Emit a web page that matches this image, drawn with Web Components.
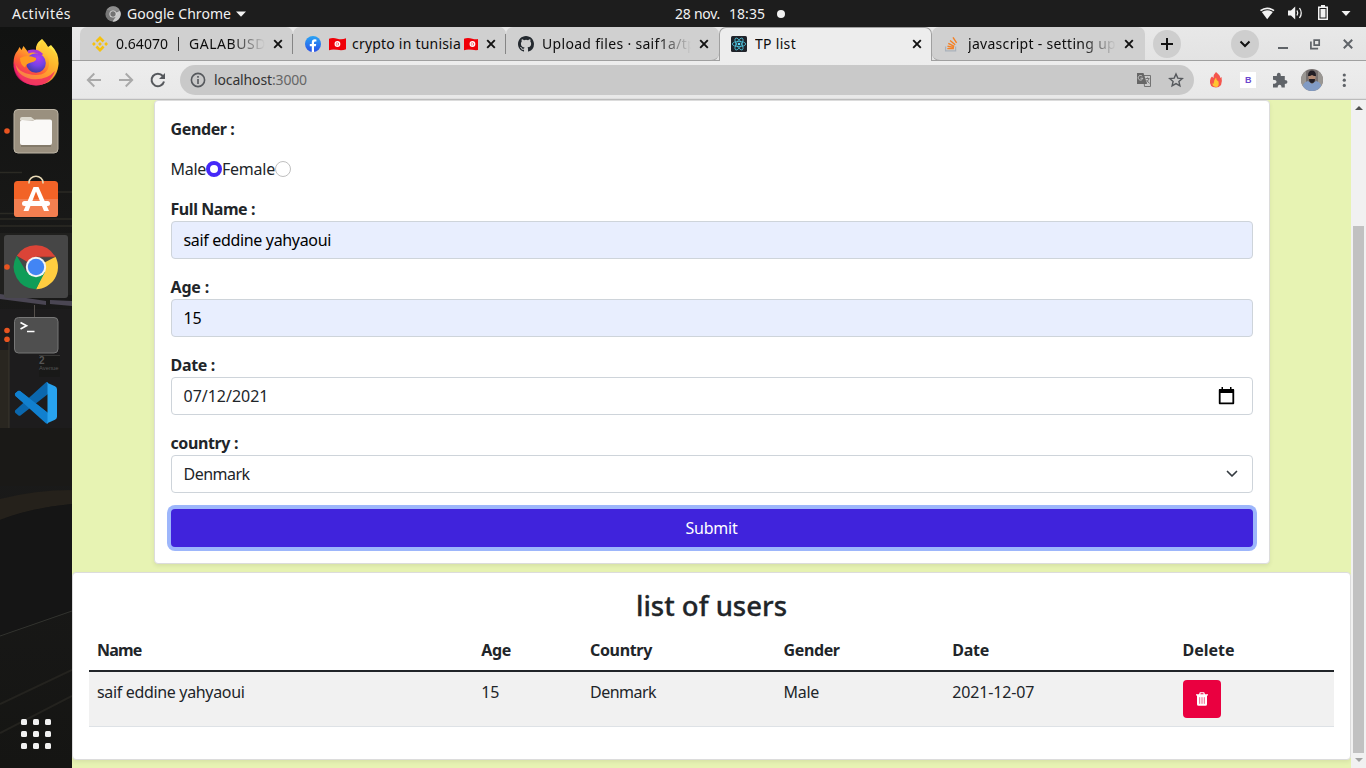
<!DOCTYPE html>
<html lang="fr">
<head>
<meta charset="utf-8">
<title>TP list</title>
<style>
html,body{margin:0;height:100%;overflow:hidden;background:#1d1d1d}
body{font-family:"Noto Sans","Open Sans",sans-serif}
</style>
</head>
<body>
<desk-top></desk-top>
<script>
const define = (name, html, setup) => customElements.define(name, class extends HTMLElement {
  connectedCallback() {
    if (this.shadowRoot) return;
    const t = document.createElement('template');
    t.innerHTML = typeof html === 'function' ? html(this) : html;
    this.attachShadow({mode: 'open'}).appendChild(t.content.cloneNode(true));
    if (setup) setup(this);
  }
});

/* A line of text tracked to a given width; --lift raises its baseline. */
define('fit-text', `<style>
:host{display:inline-block;white-space:pre;flex:none;vertical-align:var(--lift,0px);margin-top:calc(-1*var(--lift,0px));margin-bottom:var(--lift,0px)}
span{display:inline-block;white-space:pre}
</style><span><slot></slot></span>`, el => {
  const w = +el.getAttribute('w'), span = el.shadowRoot.querySelector('span');
  const natural = span.getBoundingClientRect().width;
  if (w && natural) {
    span.style.letterSpacing = ((w - natural) / el.textContent.length) + 'px';
    el.style.width = w + 'px';
  }
});

define('top-bar', `<style>
:host{--lift:.5px;display:grid;grid-template-columns:1fr auto 1fr;align-items:center;height:27px;background:#1d1d1d;color:#f2f2f2;font-size:14px;line-height:27px}
div{display:flex;align-items:center;height:27px}
.l{padding-left:12px}.l svg{margin:0 6px 0 34px}.l .tri{margin:0 0 0 5px}
.c{gap:9px;padding-left:94px}.c i{width:8px;height:8px;border-radius:50%;background:#f2f2f2;margin-left:3px}
.r{justify-content:flex-end}
</style>
<div class="l"><fit-text w="59">Activités</fit-text>
<svg width="16" height="16" viewBox="0 0 16 16"><circle cx="8" cy="8" r="7.6" fill="#777"/><path d="M8 8 15 4.7A7.6 7.6 0 0 1 7.6 15.6L11.4 9.8Z" fill="#c9c9c9"/><path d="M1.5 4A7.6 7.6 0 0 1 15 4.7H8Z" fill="#8d8d8d"/><circle cx="8" cy="8" r="3.6" fill="#ddd"/><circle cx="8" cy="8" r="2.7" fill="#737373"/></svg>
<fit-text w="104">Google Chrome</fit-text><svg class="tri" width="10" height="6"><path d="M0 .5H10L5 5.7Z" fill="#f2f2f2"/></svg></div>
<div class="c"><fit-text w="45">28 nov.</fit-text><fit-text w="36">18:35</fit-text><i></i></div>
<div class="r"><svg width="110" height="27" viewBox="1256 0 110 27"><g fill="#f2f2f2"><path d="M1260 10Q1267 5 1274.500 10L1273.500 11.300Q1267 7 1261 11.300Z"/><path d="M1261.800 12Q1267 8.500 1272.800 12L1267.200 19.300Z"/><path d="M1288 10.500h3l4.200-4v13l-4.200-4h-3z"/><path d="M1318 6.500h3v-1.500h4v1.500h3v13.500h-10z"/><path d="M1341.500 11H1350.500L1346 16Z"/></g><rect x="1320" y="8.500" width="6" height="9.500" fill="#f2f2f2" stroke="#1d1d1d" stroke-width="1"/><g fill="none" stroke="#f2f2f2" stroke-width="1.300"><path d="M1297 10.500q1.500 2.500 0 5M1299.500 8q3.500 5 0 10"/></g></svg></div>`);

const dock = {
 firefox: `<defs><linearGradient id="a" x1=".8" y1=".1" x2=".3" y2="1"><stop offset="0" stop-color="#fff44f"/><stop offset=".35" stop-color="#ffa52a"/><stop offset=".65" stop-color="#ff5a36"/><stop offset="1" stop-color="#e31587"/></linearGradient><radialGradient id="b" cx=".6" cy=".25" r=".8"><stop offset="0" stop-color="#b23cf0"/><stop offset=".5" stop-color="#7542e5"/><stop offset="1" stop-color="#3a3a9c"/></radialGradient></defs>
 <path d="M42 39q4 4 6 8l3-2q8 8 7.500 18a22.500 22.500 0 0 1-45 0Q13.500 55 18 50l1.500-3 2 3 2-4 4.500 6 8-2q-1-6 6-11z" fill="url(#a)"/><path d="M42 39q-3 6-1 11 8 3 8 13 0 12-13 12-16-1-20-10 2 20 21 20 20-1 21.500-21Q58 52 48 47q-2-4-6-8z" fill="#ffc52e" opacity=".55"/><path d="M14 62q3 14 17 17 15 2 24-8-5 14-19 14.500Q16 84 13.500 67z" fill="#f0186a" opacity=".7"/>
 <circle cx="36" cy="63" r="9.800" fill="url(#b)"/><path d="M20 58q7-4 16 0 1 3-5 4.500-5 1-6 5-5-3-5-9.500z" fill="#ff9a22"/><path d="M28 52q8-3 14 3" stroke="#a837d8" stroke-width="3" fill="none"/>`,
 files: `<rect x="14" y="109.500" width="44" height="43.500" rx="4" fill="#9a907f" stroke="#bdb5a6"/><path d="M20 119q0-2 2-2h9l4 3h-15z" fill="#dcd9ce"/><path d="M20 122q0-2 2-2l11 .5 3-1h14q2 0 2 2v21.500q0 2-2 2H22q-2 0-2-2z" fill="#faf9f7"/><path d="M21 146h30" stroke="#6d6557"/><circle cx="7" cy="131" r="2.800" fill="#e95420"/>`,
 store: `<rect x="14" y="181" width="44" height="36" rx="3.500" fill="#f26327"/><path d="M14 199h44v14.500q0 3.500-3.500 3.500h-37q-3.500 0-3.500-3.500z" fill="#f37f50"/><path d="M29 183.500v-1a7 6.200 0 0 1 14 0v1" fill="none" stroke="#e8d9b5" stroke-width="1.600"/><g fill="#fff"><path d="M33.500 187h5l10.500 24h-5L36 191.500 28.500 211h-5z"/><rect x="22" y="201" width="28" height="5" rx="2.500"/></g>`,
 chrome: `<rect x="4" y="235" width="64" height="63" rx="3" fill="#464646"/><path d="M36 267 16.800 255.800A22.200 22.200 0 0 1 55.300 256.800H36Z" fill="#db4437"/><path d="M36 267 55.500 256.800A22.200 22.200 0 0 1 36 289.200L44 272Z" fill="#ffcd40"/><path d="M16.800 255.800A22.200 22.200 0 0 0 36 289.200L45 272 36 267 26.500 272Z" fill="#0f9d58"/><path d="M36 256.800H55.300" stroke="#c53929" stroke-width=".6"/><circle cx="36" cy="267" r="10.200" fill="#f4f4f4"/><circle cx="36" cy="267" r="8.200" fill="#4285f4"/><circle cx="7" cy="267" r="2.800" fill="#e95420"/>`,
 terminal: `<rect x="14.500" y="317.500" width="43.500" height="35.500" rx="4" fill="#4f4f4f" stroke="#777"/><path d="M20.500 322.500l6 3.200-6 3.200M27 331.500h7.500" fill="none" stroke="#fff" stroke-width="1.700"/><circle cx="7" cy="330.500" r="2.800" fill="#e95420"/><circle cx="7" cy="339.200" r="2.800" fill="#e95420"/>`,
 code: `<path d="M15 393.500l3-2.500q1-.5 2 0L48 413v10.500L15.500 396q-1-1-.5-2.500z" fill="#0878c9"/><path d="M15 410.500q-.5 1.500.5 2.500l3 2.500q1 .5 2 0L48 394v-12q-2 0-3 1.200z" fill="#0b67ad"/><path d="M15 393.500l3-2.500q1-.5 2 0L38 405 48 413v10.500q-2 .5-3-1L15.500 396z" fill="#1180cf"/><path d="M45.500 382l9.500 4.200q2 1 2 3v27.600q0 2-2 3l-9.500 4.200q2-.5 2-2.500v-37q0-2-2-2.500z" fill="#28a2ee"/>`
};
define('dock-icon', el => `<style>:host{display:block;height:68px}svg{display:block;overflow:visible}</style><svg width="72" height="68" viewBox="0 ${el.getAttribute('top')} 72 68">${dock[el.getAttribute('name')]}</svg>`);

define('app-dock', `<style>
:host{display:flex;flex-direction:column;position:relative;width:72px;padding-top:1px;box-sizing:border-box;background:#151514}
.wall{position:absolute;inset:0}
dock-icon,.grid{position:relative}
.grid{display:grid;grid-template-columns:repeat(3,6px);gap:6px;margin:auto 0 19px 21px}
.grid i{width:6px;height:6px;border-radius:1.500px;background:#f1f1f1}
</style>
<svg class="wall" width="72" height="741" viewBox="0 27 72 741">
<defs><linearGradient id="s" x2="0" y2="1"><stop offset="0" stop-color="#111211"/><stop offset=".3" stop-color="#191918"/><stop offset=".5" stop-color="#1b1b1b"/><stop offset="1" stop-color="#151513"/></linearGradient></defs>
<rect y="27" width="72" height="741" fill="url(#s)"/>
<path d="M0 172.500h22M0 213.500h34M30 192h42M0 226h72M0 219h72" stroke="#2b2a24" stroke-width="1.500"/>
<path d="M0 233h72v62H0z" fill="#20201e"/><path d="M0 294l46 7v4L0 299zM50 300l22 1v5l-22-2z" fill="#4a4653"/><path d="M0 309h72v119H0z" fill="#1d1c1d"/><path d="M34.500 305v12" stroke="#55504c"/><path d="M0 350h9v78H0z" fill="#292620"/><path d="M9 340v88" stroke="#3a362e"/><path d="M39 355h21v22H39z" fill="#191918"/><path d="M39 355.500h21" stroke="#373735"/>
<path d="M0 428H72v58H0z" fill="#1a1917"/><path d="M0 499q35-9 72-9v14Q30 508 0 520z" fill="#25211b"/><path d="M0 520q30-12 72-16v106L0 636z" fill="#151515"/><path d="M0 636 72 611" stroke="#32332f"/><path d="M0 704 72 670M0 733 72 696" stroke="#24231f" stroke-width="2"/>
<g fill="#555" font-family="Liberation Sans" ><text x="39" y="364" font-size="10" font-weight="bold">2</text><text x="39" y="370" font-size="5.800">Avenue</text></g></svg>
<dock-icon name="firefox" top="28"></dock-icon><dock-icon name="files" top="96"></dock-icon><dock-icon name="store" top="164"></dock-icon><dock-icon name="chrome" top="232"></dock-icon><dock-icon name="terminal" top="300"></dock-icon><dock-icon name="code" top="368"></dock-icon>
<div class="grid"><i></i><i></i><i></i><i></i><i></i><i></i><i></i><i></i><i></i></div>`);

define('flag-tn', `<style>:host{display:block;flex:none;width:17px;height:16px}svg{display:block}</style><svg width="17" height="16" viewBox="0 0 17.500 16"><path d="M0 2.500q4-1.500 8.500 0t9-.5v11.500q-4 1.500-9 .5t-8.500.5z" fill="#f00008"/><circle cx="8.700" cy="8" r="3" fill="#fff"/><path d="M10.300 6.500a2 2 0 1 0 0 3 1.800 1.800 0 1 1 0-3z" fill="#f00008"/><circle cx="9.600" cy="8" r=".7" fill="#f00008"/></svg>`);

const fav = {
 binance: '<g fill="#f5c10e"><path d="M8 0l4.500 4.500-1.900 1.900L8 3.800 5.400 6.400 3.500 4.500zM1.900 6.100 3.800 8 1.900 9.900 0 8zM14.100 6.100 16 8l-1.900 1.900L12.200 8zM8 6.100 9.900 8 8 9.900 6.100 8zM8 16l4.500-4.500-1.900-1.900L8 12.200 5.400 9.600 3.500 11.500z"/></g>',
 facebook: '<defs><linearGradient id="f" x2="0" y2="1"><stop stop-color="#2aa4f4"/><stop offset="1" stop-color="#2851e8"/></linearGradient></defs><circle cx="8" cy="8" r="8" fill="url(#f)"/><path d="M6.800 16v-5.700H4.800V8h2V6.500q0-3.200 3.100-3.200l1.500.1v2h-1q-1.400 0-1.400 1.300V8h2.200l-.4 2.300H9V16z" fill="#fff"/>',
 github: '<path fill="#24292f" d="M8 0C3.580 0 0 3.580 0 8c0 3.540 2.290 6.530 5.470 7.590.4.070.55-.17.55-.38v-1.490c-2.010.37-2.530-.49-2.690-.94-.09-.23-.48-.94-.82-1.130-.28-.15-.68-.52-.01-.53.63-.01 1.080.58 1.230.82.72 1.210 1.870.87 2.330.66.07-.52.28-.87.51-1.070-1.780-.2-3.640-.89-3.640-3.950 0-.87.310-1.590.82-2.150-.08-.2-.36-1.020.08-2.120 0 0 .67-.21 2.200.82a7.600 7.600 0 0 1 4 0c1.530-1.040 2.200-.82 2.200-.82.44 1.100.16 1.920.08 2.120.51.56.82 1.270.82 2.150 0 3.070-1.870 3.750-3.650 3.950.29.25.54.73.54 1.480v2.200c0 .21.15.46.55.38A8 8 0 0 0 16 8c0-4.420-3.580-8-8-8z"/>',
 react: '<rect width="16" height="16" rx="1.500" fill="#20232a"/><g fill="none" stroke="#4cc4dd" stroke-width=".8"><ellipse cx="8" cy="8" rx="6.700" ry="2.600"/><ellipse cx="8" cy="8" rx="6.700" ry="2.600" transform="rotate(60 8 8)"/><ellipse cx="8" cy="8" rx="6.700" ry="2.600" transform="rotate(120 8 8)"/></g><circle cx="8" cy="8" r="1.300" fill="#61dafb"/>',
 stack: '<path d="M1.600 10.500v4.300h10V10.500" fill="none" stroke="#aab2bb" stroke-width="1.300"/><g stroke="#f48024" stroke-width="1.400"><path d="M3.300 12.600h6.600M3.500 10.200l6.500 1.300M4.300 7.400l6 2.900M6.100 4.500l5.100 4.200M9 1.300l3.600 5.600" /></g>'
};
define('browser-tab', el => `<style>
:host{display:flex;align-items:center;position:relative;flex:0 0 213px;min-width:0;height:34px;box-sizing:border-box;background:#d0d0d0;border-radius:7px 7px 0 0;border-bottom:1px solid #a0a0a0;padding:0 10px 0 12px;color:#0d0d0d;font-size:14px;line-height:20px}
:host(:not([active]):not([last]))::after{content:"";position:absolute;right:0;top:7px;width:1px;height:20px;background:#858585}
:host([active]){background:#ededed;border:1px solid #a0a0a0;border-bottom:0;padding:0 9px 2px 11px}
:host([beforeactive]){border-radius:7px 7px 8px 0}:host([beforeactive])::after{display:none}
:host([last]){border-radius:7px 7px 0 8px;padding-right:11px}
.ic{flex:none;margin-right:8px}
.t{display:flex;align-items:center;flex:1;min-width:0;overflow:hidden}
:host([fade]) .t{-webkit-mask-image:linear-gradient(90deg,#000 calc(100% - 34px),transparent)}
.x{flex:none;margin-left:8px}
</style><svg class="ic" width="16" height="16">${fav[el.getAttribute('icon')]}</svg><div class="t"><slot></slot></div><svg class="x" width="10" height="10"><path d="M1.200 1.200 8.800 8.800M8.800 1.200 1.200 8.800" stroke="#111" stroke-width="1.900"/></svg>`);

define('tab-strip', `<style>
:host{display:flex;height:34px;background:linear-gradient(#e8e8e8,#e3e3e3);box-shadow:inset 0 -1px #a0a0a0;padding-left:8px}
.bar{flex:none;width:1px;height:14px;background:#333;margin:0 10px}
flag-tn+fit-text{margin-left:6px;margin-right:3px}
.plus,.menu{display:flex;flex:none;align-items:center;justify-content:center;width:28px;height:28px;border-radius:50%;background:#cecece;margin:3px 0 0 8px}
.menu{margin-left:50px}
.win{flex:none;margin-left:18px}
</style>
<browser-tab icon="binance" fade><fit-text w="52">0.64070</fit-text><span class="bar"></span><fit-text w="77">GALABUSD</fit-text></browser-tab>
<browser-tab icon="facebook"><flag-tn></flag-tn><fit-text w="109">crypto in tunisia</fit-text><flag-tn></flag-tn></browser-tab>
<browser-tab icon="github" fade beforeactive><fit-text w="154">Upload files · saif1a/tp</fit-text></browser-tab>
<browser-tab icon="react" active><fit-text w="41">TP list</fit-text></browser-tab>
<browser-tab icon="stack" fade last><fit-text w="148">javascript - setting up</fit-text></browser-tab>
<span class="plus"><svg width="14" height="14"><path d="M1 7h12M7 1v12" stroke="#111" stroke-width="2"/></svg></span>
<span class="menu"><svg width="12" height="8"><path d="M1.500 1.500 6 6l4.500-4.500" fill="none" stroke="#111" stroke-width="2"/></svg></span>
<svg class="win" width="84" height="34" viewBox="1277 27 84 34" fill="none" stroke="#5f6368" stroke-width="2"><path d="M1278 48h10"/><path d="M1314.200 40.200h5v5h-5z" stroke-width="1.700"/><path d="M1310.900 41.500v7.200h7.200" stroke-width="1.700"/><path d="M1343.800 39.800l8.400 8.400M1352.200 39.800l-8.400 8.400"/></svg>`);

define('address-bar', `<style>
:host{--lift:1px;display:flex;align-items:center;height:39px;box-sizing:border-box;border-bottom:1px solid #bbb;background:linear-gradient(#ededed,#e8e8e8);font-size:14px;box-shadow:inset 0 -1px #dedede}
.nav{flex:none;width:108px}
.url{display:flex;align-items:center;width:1014px;height:30px;box-sizing:border-box;border-radius:15px;background:#c9c9c9;padding:0 8px 0 10px;color:#333}
.url fit-text{margin-left:8px}.url svg:last-child{margin-left:auto}
svg{display:block;flex:none}
</style>
<svg class="nav" width="108" height="30" viewBox="72 65 108 30" fill="none" stroke="#a9a9a9" stroke-width="1.900"><path d="M101 80H88M94.300 73.500 87.800 80l6.500 6.500M119 80h13M125.700 73.500l6.500 6.500-6.500 6.500"/><path d="M162.800 76A6.300 6.300 0 1 0 164 81.500" stroke="#55585c" stroke-width="2"/><path d="M165 73v6h-6z" fill="#55585c" stroke="none"/></svg>
<div class="url"><svg width="16" height="16" fill="none" stroke="#55585c" stroke-width="1.600"><circle cx="8" cy="8" r="6.600"/><path d="M8 7v5M8 4v1.800"/></svg><fit-text w="93">localhost<span style="color:#666">:3000</span></fit-text>
<svg width="52" height="24" viewBox="1134 68 52 24"><path d="M1143.500 75.500h7v11h-6z" fill="none" stroke="#737373"/><path d="M1137 73h6.500l3.500 11h-10z" fill="#666"/><path d="M1142.200 76.200a2.300 2.300 0 1 0 .6 2h-2.300" fill="none" stroke="#c9c9c9" stroke-width="1"/><path d="M1145.500 78.500h4M1147.500 77.500v1M1149 79l-3 4M1146.500 80l3 3.500" stroke="#777" fill="none"/><path d="M1176 74l1.800 4.100 4.500.4-3.400 3 1 4.400-3.900-2.300-3.900 2.300 1-4.400-3.400-3 4.500-.4z" fill="none" stroke="#55585c" stroke-width="1.400"/></svg></div>
<svg width="172" height="36" viewBox="1194 62 172 36"><defs><clipPath id="av"><circle cx="1312" cy="80" r="11"/></clipPath></defs>
<path d="M1216 72q5 4 4 6l1.500-1q2 10-5.500 10.500-7-.5-6-7 .5-3 2-4l1.500 1.500q0-4 2.500-6z" fill="#f4554d"/><path d="M1216 77.500q0 2.500 2.500 4 1 5.500-2.500 5.500-4-.5-3.500-4l1 1q0-4 2.500-6.500z" fill="#ffc530"/>
<rect x="1240" y="72" width="16" height="16" fill="#fff"/><text x="1245" y="83.300" font-family="Liberation Sans" font-weight="bold" font-size="9" fill="#6b48cf">B</text>
<path d="M1273 76h3.800q0-3.300 2-3.300t2 3.300h4v4q2.700 0 2.700 2t-2.700 2v3.500h-3.300q0-2.800-1.900-2.800t-1.900 2.800h-4.700v-3.700q3.500 0 3.500-2t-3.500-2z" fill="#5f6368"/>
<g clip-path="url(#av)"><path d="M1301 69h22v22h-22z" fill="#76706f"/><path d="M1301 69h5v22h-5zM1318 69h5v22h-5z" fill="#9a9793"/><path d="M1302 91q0-9 6-10l4 3 4-3q6 1 6 10z" fill="#819bc5"/><ellipse cx="1312" cy="77.500" rx="3.500" ry="5" fill="#b18972"/><path d="M1308 76q0-5.500 4-5.500t4 5.500h-2l-2-1-2 1zM1309 79h6q0 4-3 4t-3-4z" fill="#211e24"/></g>
<g fill="#5f6368"><circle cx="1344.300" cy="75" r="1.600"/><circle cx="1344.300" cy="80.200" r="1.600"/><circle cx="1344.300" cy="85.400" r="1.600"/></g></svg>`);

define('page-card', `<style>
:host{display:block;box-sizing:border-box;border:1px solid #dcdcdc;border-radius:4px;background:#fff;box-shadow:0 2px 4px rgba(0,0,0,.075);padding:16px}
</style><slot></slot>`);

define('form-field', el => `<style>
:host{display:block;margin-bottom:16px;height:62px}
.l{height:24px;line-height:24px;font-weight:700}
.i{display:flex;align-items:center;height:38px;box-sizing:border-box;border:1px solid #ced4da;border-radius:4px;padding:0 17px 0 12px;line-height:24px;color:#212529}
:host([filled]) .i{background:#e8eefe;color:#000}
svg{margin-left:auto}
</style><div class="l"><fit-text w="${el.getAttribute('lw')}">${el.getAttribute('label')}</fit-text></div><div class="i"><slot></slot>${
 {date:'<svg width="17" height="18" viewBox="0 0 17 18"><path d="M1.700 3h13.600v13.300H1.700z" fill="none" stroke="#000" stroke-width="1.800" stroke-linejoin="round"/><path d="M1 2h15v4H1zM3.500 0h1.500v3H3.500zM12 0h1.500v3h-1.500z"/></svg>',
  select:'<svg width="16" height="16" viewBox="0 0 16 16" style="margin-right:-5px"><path fill="none" stroke="#343a40" stroke-linecap="round" stroke-linejoin="round" stroke-width="1.700" d="M3.500 5.500 8 10l4.500-4.500"/></svg>'}[el.getAttribute('kind')]||''}</div>`);

define('user-form', `<style>
:host{display:block}
.g{height:24px;line-height:24px;margin-bottom:16px;display:flex;align-items:center}
b{font-weight:700;display:flex}
i{width:16px;height:16px;box-sizing:border-box;border-radius:50%;border:1px solid #bfbfbf}
i.on{border:4.500px solid #4528f8}
.btn{display:flex;align-items:center;justify-content:center;height:38px;border-radius:4px;background:#4023dc;color:#fff;box-shadow:0 0 0 4px #9db6fb}
</style>
<div class="g"><b><fit-text w="64">Gender :</fit-text></b></div>
<div class="g"><fit-text w="35.500">Male</fit-text><i class="on"></i><fit-text w="53">Female</fit-text><i></i></div>
<form-field filled label="Full Name :" lw="84.500"><fit-text w="147.500">saif eddine yahyaoui</fit-text></form-field>
<form-field filled label="Age :" lw="38.500"><fit-text w="18">15</fit-text></form-field>
<form-field kind="date" label="Date :" lw="44.500"><fit-text w="85">07/12/2021</fit-text></form-field>
<form-field kind="select" label="country :" lw="67.500"><fit-text w="66">Denmark</fit-text></form-field>
<div class="btn"><fit-text w="52">Submit</fit-text></div>`);

define('user-table', `<style>
:host{display:block}
h3{--lift:.5px;margin:0 0 7.400px;height:33.600px;line-height:33.600px;font-size:27.500px;font-weight:500;text-align:center;-webkit-text-stroke:.3px #212529}
.row{display:grid;grid-template-columns:384.200px 108.800px 193.600px 168.600px 230.400px 1fr}
.row>*{padding:8px;line-height:24px}
.head{font-weight:700;border-bottom:2px solid #212529;height:40px}
.data{background:#f1f1f1;height:54px;border-bottom:1px solid #dee2e6;margin-bottom:16px}
.del{display:flex;align-items:center;justify-content:center;width:38px;height:38px;border-radius:4px;background:#ea0040}
</style>
<h3><fit-text w="151">list of users</fit-text></h3>
<div class="row head"><div><fit-text w="44.500">Name</fit-text></div><div><fit-text w="30">Age</fit-text></div><div><fit-text w="62">Country</fit-text></div><div><fit-text w="56">Gender</fit-text></div><div><fit-text w="37">Date</fit-text></div><div><fit-text w="52">Delete</fit-text></div></div>
<div class="row data"><div><fit-text w="147.500">saif eddine yahyaoui</fit-text></div><div><fit-text w="18">15</fit-text></div><div><fit-text w="66">Denmark</fit-text></div><div><fit-text w="35.500">Male</fit-text></div><div><fit-text w="82">2021-12-07</fit-text></div><div><span class="del"><svg width="14" height="16" viewBox="0 0 14 16"><path d="M4 3.200 4.800 1.200h4.400l.8 2h3v1.400h-1v8.700q0 1.500-1.500 1.500h-7Q2 14.800 2 13.300V4.600H1V3.200zM5.400 3.200h3.200l-.3-.9H5.700z" fill="#fff" fill-rule="evenodd"/><path d="M4.700 6.200v6.600M7 6.200v6.600M9.300 6.200v6.600" stroke="#ee4c7d" stroke-width=".9"/></svg></span></div></div>`);

define('web-page', `<style>
:host{display:flex;height:668px;overflow:hidden}
.view{flex:1;background:#e7f3b3;color:#212529;font-size:16px}
.form{width:1116px;margin:0 auto 8px}
.form,.list{display:block}
.scroll{width:15px;background:#f1f1f1;display:flex;flex-direction:column;align-items:center}
.thumb{width:11px;height:527px;margin-top:116px;background:#c1c1c1}
svg{display:block;margin-top:6px;flex:none}
</style>
<div class="view"><page-card class="form"><user-form></user-form></page-card><page-card class="list"><user-table></user-table></page-card></div>
<div class="scroll"><svg width="8" height="4" ><path d="M0 4 4 0 8 4z" fill="#505050"/></svg><div class="thumb"></div><svg width="8" height="5" style="margin-top:5px"><path d="M0 0 4 4 8 0z" fill="#a3a3a3"/></svg></div>`);

define('browser-window', `<style>:host{display:block;flex:1;min-width:0;overflow:hidden}</style><tab-strip></tab-strip><address-bar></address-bar><web-page></web-page>`);
define('desk-top', `<style>:host{display:flex;flex-direction:column;width:1366px;height:768px;overflow:hidden}.m{display:flex;height:741px}</style><top-bar></top-bar><div class="m"><app-dock></app-dock><browser-window></browser-window></div>`);
</script>
</body>
</html>
